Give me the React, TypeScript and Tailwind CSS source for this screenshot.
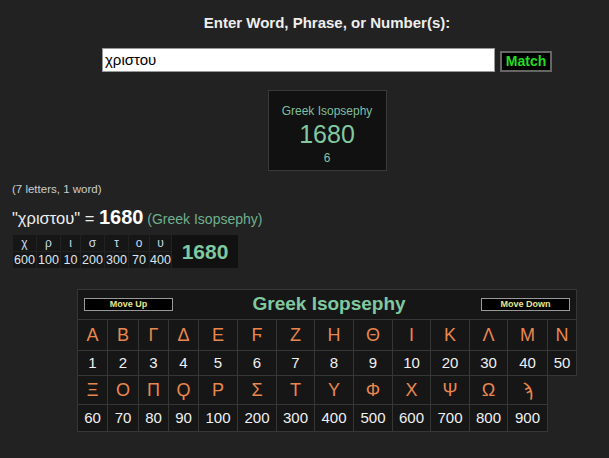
import React from "react";

const row1 = ["Α","Β","Γ","Δ","Ε","Ϝ","Ζ","Η","Θ","Ι","Κ","Λ","Μ","Ν"];
const row2 = ["1","2","3","4","5","6","7","8","9","10","20","30","40","50"];
const row3 = ["Ξ","Ο","Π","Ϙ","Ρ","Σ","Τ","Υ","Φ","Χ","Ψ","Ω","ϡ"];
const row4 = ["60","70","80","90","100","200","300","400","500","600","700","800","900"];
const colW = [30,31,30,30,39,39,38,39,39,38,39,38,40,29];

const breakdown: [string, string][] = [
  ["χ","600"],["ρ","100"],["ι","10"],["σ","200"],["τ","300"],["ο","70"],["υ","400"],
];
const bdW = [24,24,20,24,24,21,22];

export default function App() {
  return (
    <div className="w-[609px] h-[458px] bg-[#222] overflow-hidden font-['Liberation_Sans',Arial,sans-serif]">
      <div className="w-[654px] flex flex-col items-center">
        <div className="mt-[14px] text-[15px] leading-[17px] font-bold text-[#eee]">
          Enter Word, Phrase, or Number(s):
        </div>
        <div className="mt-[17px] flex items-end gap-[5px]">
          <div className="w-[393px] h-[24px] bg-white border border-[#999] flex items-center px-[2px] text-[15px] text-black">
            χριστου
          </div>
          <div className="w-[52px] h-[21px] bg-black border-2 border-[#666] flex items-center justify-center text-[14px] font-bold text-[#22dd22]">
            Match
          </div>
        </div>
        <div className="mt-[18px] w-[119px] h-[81px] bg-[#111] border border-[#3a3a3a] flex flex-col items-center">
          <div className="mt-[13px] text-[12px] leading-[14px] text-[#7fbf9f]">Greek Isopsephy</div>
          <div className="mt-[3px] text-[25px] leading-[26px] text-[#80c8a0]">1680</div>
          <div className="mt-[4px] text-[12px] leading-[14px] text-[#80c8a0]">6</div>
        </div>
      </div>
      <div className="px-[12px]">
        <div className="mt-[12px] text-[11.5px] leading-[13px] text-[#ccc]">(7 letters, 1 word)</div>
        <div className="mt-[11px] flex items-baseline text-[#eee] leading-[20px]">
          <span className="text-[16.5px]">"χριστου" =&nbsp;</span>
          <span className="text-[20px] font-bold text-white">1680</span>
          <span className="text-[14px] text-[#6fb08f]">&nbsp;(Greek Isopsephy)</span>
        </div>
        <div className="mt-[5px] flex">
          <table className="border-collapse bg-[#161616]">
            <tbody>
              <tr className="h-[17px]">
                {breakdown.map(([l], i) => (
                  <td key={i} style={{ width: bdW[i] }} className="border border-[#222] text-center text-[12px] leading-[14px] text-[#c8dcee] p-0">{l}</td>
                ))}
                <td rowSpan={2} className="w-[67px] border border-[#222] bg-[#111] text-center text-[21px] font-bold text-[#80c8a0] p-0">1680</td>
              </tr>
              <tr className="h-[17px]">
                {breakdown.map(([, n], i) => (
                  <td key={i} className="border border-[#222] text-center text-[12.5px] leading-[14px] text-[#dde6ee] p-0">{n}</td>
                ))}
              </tr>
            </tbody>
          </table>
        </div>
      </div>
      <div className="mt-[20px] ml-[77px]">
        <table className="border-collapse table-fixed w-[499px]">
          <colgroup>
            {colW.map((w, i) => (
              <col key={i} style={{ width: w }} />
            ))}
          </colgroup>
          <tbody>
            <tr className="h-[30px]">
              <td colSpan={14} className="border border-[#363636] bg-[#161616] p-0">
                <div className="flex items-center justify-between px-[6px]">
                  <div className="w-[89px] h-[13px] bg-black border border-[#999] flex items-center justify-center text-[9px] font-bold text-[#e6e68c] leading-none">Move Up</div>
                  <div className="text-[19px] font-bold text-[#80c8a0] leading-[22px] ml-[4px] -mt-[1px]">Greek Isopsephy</div>
                  <div className="w-[89px] h-[13px] bg-black border border-[#999] flex items-center justify-center text-[9px] font-bold text-[#e6e68c] leading-none">Move Down</div>
                </div>
              </td>
            </tr>
            <tr className="h-[31px]">
              {row1.map((c, i) => (
                <td key={i} className="border border-[#363636] bg-[#161616] text-center text-[18px] text-[#ea874c] p-0">{c}</td>
              ))}
            </tr>
            <tr className="h-[25px]">
              {row2.map((c, i) => (
                <td key={i} className="border border-[#363636] bg-[#161616] text-center text-[15px] text-[#f0f0f0] p-0">{c}</td>
              ))}
            </tr>
            <tr className="h-[29px]">
              {row3.map((c, i) => (
                <td key={i} className="border border-[#363636] bg-[#161616] text-center text-[18px] text-[#ea874c] p-0">{c}</td>
              ))}
            </tr>
            <tr className="h-[27px]">
              {row4.map((c, i) => (
                <td key={i} className="border border-[#363636] bg-[#161616] text-center text-[15px] text-[#f0f0f0] p-0">{c}</td>
              ))}
            </tr>
          </tbody>
        </table>
      </div>
    </div>
  );
}
